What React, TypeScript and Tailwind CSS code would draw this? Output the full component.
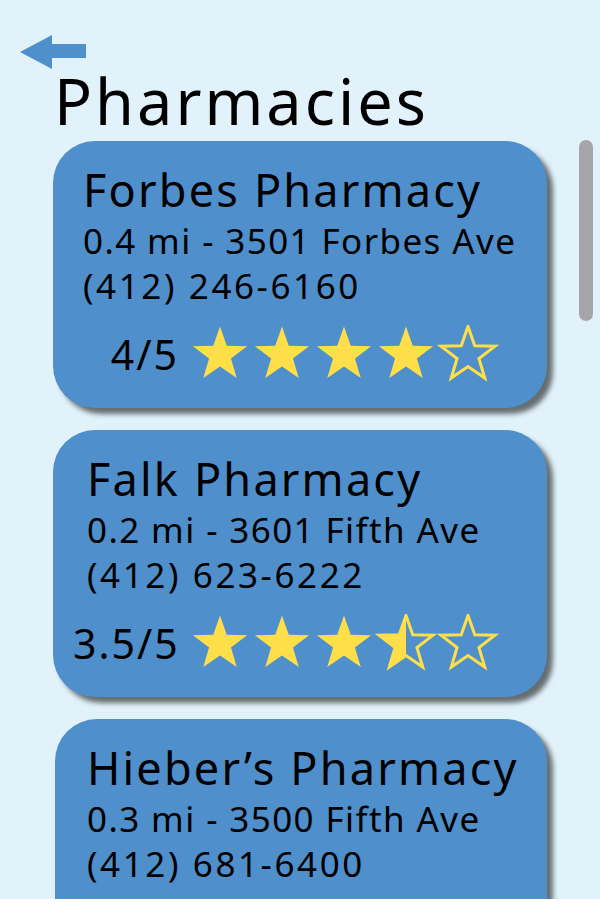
import React from "react";

function starPoints(cx: number, cy: number, R: number, r: number) {
  const pts: string[] = [];
  for (let i = 0; i < 10; i++) {
    const rad = i % 2 === 0 ? R : r;
    const a = (-90 + i * 36) * (Math.PI / 180);
    pts.push(`${(cx + rad * Math.cos(a)).toFixed(2)},${(cy + rad * Math.sin(a)).toFixed(2)}`);
  }
  return pts.join(" ");
}

const STAR = starPoints(31, 30, 28.5, 11.5);

function Star({ kind }: { kind: "full" | "half" | "empty" }) {
  const id = React.useId();
  return (
    <svg width="62" height="58" viewBox="0 0 62 58" className="block">
      {kind === "half" && (
        <defs>
          <clipPath id={id}>
            <rect x="0" y="0" width="31" height="58" />
          </clipPath>
        </defs>
      )}
      {kind === "full" && <polygon points={STAR} fill="#FEDF4A" />}
      {kind === "half" && <polygon points={STAR} fill="#FEDF4A" clipPath={`url(#${id})`} />}
      {kind !== "full" && (
        <polygon points={STAR} fill="none" stroke="#FEDF4A" strokeWidth="3" strokeLinejoin="miter" />
      )}
    </svg>
  );
}

function Card({
  name,
  addr,
  phone,
  rating,
  stars,
  pl,
  extra,
}: {
  name: string;
  addr: string;
  phone: string;
  rating?: string;
  stars?: ("full" | "half" | "empty")[];
  pl: string;
  extra?: string;
}) {
  return (
    <div
      className={`bg-[#4F8FCB] rounded-[42px] shadow-[6px_6px_5px_rgba(0,0,0,0.55)] pt-[23px] pb-[25px] text-black ${extra ?? ""}`}
    >
      <div className={pl}>
        <div className="text-[45px] leading-[52px] tracking-[2.2px]">{name}</div>
        <div className="text-[35px] leading-[45px] tracking-[1.4px] mt-[2px]">{addr}</div>
        <div className="text-[35px] leading-[45px] tracking-[2.6px]">{phone}</div>
      </div>
      {rating && stars && (
        <div className="flex items-center mt-[17px] pl-[20px]">
          <span className="text-[41px] leading-[58px] w-[106px] text-right tracking-[2px]">{rating}</span>
          <div className="flex ml-[10px]">
            {stars.map((s, i) => (
              <Star key={i} kind={s} />
            ))}
          </div>
        </div>
      )}
    </div>
  );
}

export default function App() {
  return (
    <div
      className="h-[899px] w-[600px] overflow-hidden bg-[#E1F2FB] relative"
      style={{ fontFamily: '"Noto Sans", "Open Sans", sans-serif' }}
    >
      <div className="absolute right-[7px] top-[140px] w-[14px] h-[181px] rounded-full bg-[#A6A6AA]" />
      <div className="pt-[35px] pl-[20px]">
        <svg width="66" height="34" viewBox="0 0 66 34" className="block">
          <polygon points="0,17 32,0 32,34" fill="#4F8FCB" />
          <rect x="32" y="9" width="34" height="14" fill="#4F8FCB" />
        </svg>
      </div>
      <div className="pl-[54px] text-[63px] leading-[70px] -mt-[3px] tracking-[3px] text-black">Pharmacies</div>
      <div className="flex flex-col gap-[22px] pl-[53px] w-[547px] mt-[5px]">
        <Card
          name="Forbes Pharmacy"
          addr="0.4 mi - 3501 Forbes Ave"
          phone="(412) 246-6160"
          rating="4/5"
          stars={["full", "full", "full", "full", "empty"]}
          pl="pl-[30px]"
        />
        <Card
          name="Falk Pharmacy"
          addr="0.2 mi - 3601 Fifth Ave"
          phone="(412) 623-6222"
          rating="3.5/5"
          stars={["full", "full", "full", "half", "empty"]}
          pl="pl-[34px]"
        />
        <Card
          name="Hieber’s Pharmacy"
          addr="0.3 mi - 3500 Fifth Ave"
          phone="(412) 681-6400"
          pl="pl-[32px]"
          extra="h-[260px] ml-[2px]"
        />
      </div>
    </div>
  );
}
